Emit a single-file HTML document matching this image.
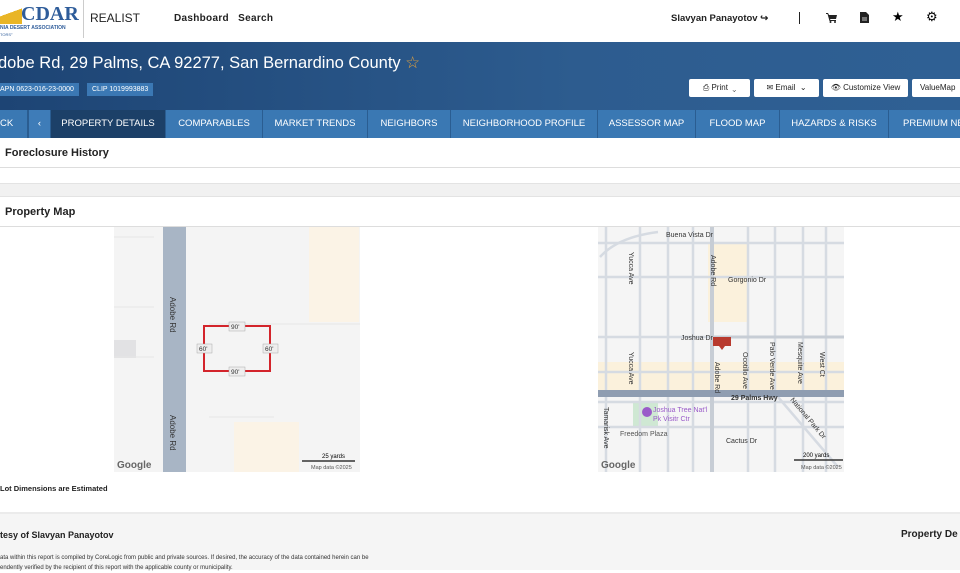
<!DOCTYPE html>
<html><head><meta charset="utf-8"><style>
*{margin:0;padding:0;box-sizing:border-box}
body{width:960px;height:570px;overflow:hidden;font-family:"Liberation Sans",sans-serif;background:#fff;position:relative}
.a{position:absolute;white-space:nowrap}
.hdr{left:0;top:0;width:960px;height:42px;background:#fff}
.ban{left:0;top:42px;width:960px;height:68px;background:linear-gradient(90deg,#1d4474,#2d5c8f 60%,#2f6094)}
.badge{background:#3b78b4;color:#fff;font-size:7px;height:13px;line-height:13px;padding:0 5px;top:83px}
.btn{top:79px;height:18px;background:#fff;border-radius:2px;font-size:8px;line-height:18px;color:#222;text-align:center}
.nav{left:0;top:110px;width:960px;height:28px;background:#3a78b3}
.tab{top:110px;height:28px;line-height:28px;color:#fff;font-size:9.5px;text-align:center;border-right:1px solid #2a5d91}
.sec{font-size:11px;font-weight:bold;color:#222}
</style></head><body>
<div class="a hdr"></div>
<div class="a" style="left:0;top:6px;width:22px;height:18px;background:linear-gradient(160deg,#fff 40%,#e9b526 40%)"></div>
<div class="a" style="top:3px;font:bold 20px 'Liberation Serif',serif;color:#2e5c9a;left:21px">CDAR</div>
<div class="a" style="left:0;top:25px;font-size:5px;font-weight:bold;color:#2e5c9a">NIA DESERT ASSOCIATION</div>
<div class="a" style="left:0;top:32px;font-size:4px;color:#2e5c9a">TORS°</div>
<div class="a" style="left:83px;top:0;width:1px;height:38px;background:#ccc"></div>
<div class="a" style="left:90px;top:11px;font-size:12px;color:#222">REALIST</div>
<div class="a" style="left:174px;top:13px;font-size:10px;font-weight:bold;color:#222;letter-spacing:.3px">Dashboard&nbsp;&nbsp; Search</div>
<div class="a" style="left:671px;top:13px;font-size:9.5px;font-weight:bold;color:#222">Slavyan Panayotov ↪</div>
<div class="a" style="left:799px;top:12px;width:1px;height:12px;background:#222"></div>
<svg class="a" style="left:826px;top:13px" width="11" height="10" viewBox="0 0 11 10"><path d="M0 0h2l1 2h8l-1 4H4l.5 1H10v1H3.5L1.5 1H0z" fill="#222"/><circle cx="4.5" cy="9" r="1" fill="#222"/><circle cx="9" cy="9" r="1" fill="#222"/></svg>
<svg class="a" style="left:860px;top:12px" width="9" height="11" viewBox="0 0 9 11"><path d="M0 0h6l3 3v8H0z" fill="#222"/><path d="M2 6h5M2 8h5" stroke="#fff" stroke-width=".8"/></svg>
<div class="a" style="left:892px;top:9px;font-size:13px">★</div>
<div class="a" style="left:926px;top:9px;font-size:13px">⚙</div>
<div class="a ban"></div>
<div class="a" style="left:-2px;top:53px;font-size:16.5px;color:#fff">dobe Rd, 29 Palms, CA 92277, San Bernardino County <span style="color:#e8a33a">☆</span></div>
<div class="a badge" style="left:0;padding-left:0">APN 0623-016-23-0000</div>
<div class="a badge" style="left:87px">CLIP 1019993883</div>
<div class="a btn" style="left:689px;width:61px">⎙ Print&nbsp; ⌄</div>
<div class="a btn" style="left:754px;width:65px">✉ Email&nbsp; ⌄</div>
<div class="a btn" style="left:823px;width:85px">👁 Customize View</div>
<div class="a btn" style="left:912px;width:60px;text-align:left;padding-left:8px">ValueMap</div>
<div class="a nav"></div>
<div class="a tab" style="left:0;width:28px;text-align:left">CK</div>
<div class="a tab" style="left:28px;width:23px;background:#3e7cb8;border-left:1px solid #2a5d91">‹</div>
<div class="a tab" style="left:51px;width:115px;background:#1c4068">PROPERTY DETAILS</div>
<div class="a tab" style="left:166px;width:97px">COMPARABLES</div>
<div class="a tab" style="left:263px;width:105px">MARKET TRENDS</div>
<div class="a tab" style="left:368px;width:83px">NEIGHBORS</div>
<div class="a tab" style="left:451px;width:147px">NEIGHBORHOOD PROFILE</div>
<div class="a tab" style="left:598px;width:98px">ASSESSOR MAP</div>
<div class="a tab" style="left:696px;width:84px">FLOOD MAP</div>
<div class="a tab" style="left:780px;width:109px">HAZARDS &amp; RISKS</div>
<div class="a tab" style="left:889px;width:100px;text-align:left;padding-left:14px">PREMIUM NE</div>
<div class="a sec" style="left:5px;top:147px">Foreclosure History</div>
<div class="a" style="left:0;top:167px;width:960px;height:1px;background:#ddd"></div>
<div class="a" style="left:0;top:183px;width:960px;height:14px;background:#f1f1f1;border-top:1px solid #e3e3e3;border-bottom:1px solid #e3e3e3"></div>
<div class="a sec" style="left:5px;top:206px">Property Map</div>
<div class="a" style="left:0;top:226px;width:960px;height:1px;background:#ddd"></div>
<svg class="a" style="left:114px;top:227px" width="246" height="245">
<rect width="246" height="245" fill="#f4f4f4"/>
<rect x="195" y="0" width="50" height="95" fill="#fbf3e6"/>
<rect x="120" y="195" width="65" height="50" fill="#fbf3e6"/>
<rect x="0" y="113" width="22" height="18" fill="#e2e2e4"/>
<path d="M0 10H40M0 80H40M0 130H40M95 97H246M95 190H160" stroke="#e6e6e6" fill="none"/>
<rect x="49" y="0" width="23" height="245" fill="#a8b5c5"/>
<text transform="translate(56,70) rotate(90)" font-size="8" fill="#333" font-family="Liberation Sans">Adobe Rd</text>
<text transform="translate(56,188) rotate(90)" font-size="8" fill="#333" font-family="Liberation Sans">Adobe Rd</text>
<rect x="90" y="99" width="66" height="45" fill="none" stroke="#d3242b" stroke-width="2"/>
<g font-size="6.5" font-family="Liberation Sans" fill="#333">
<rect x="115" y="95" width="16" height="9" fill="#eee" stroke="#aaa" stroke-width=".5"/><text x="117" y="102">90'</text>
<rect x="115" y="140" width="16" height="9" fill="#eee" stroke="#aaa" stroke-width=".5"/><text x="117" y="147">90'</text>
<rect x="83" y="117" width="15" height="9" fill="#eee" stroke="#aaa" stroke-width=".5"/><text x="85" y="124">60'</text>
<rect x="149" y="117" width="15" height="9" fill="#eee" stroke="#aaa" stroke-width=".5"/><text x="151" y="124">60'</text>
</g>
<text x="3" y="241" font-size="10" font-weight="bold" fill="#666" font-family="Liberation Sans">Google</text>
<path d="M188 234H241" stroke="#333" stroke-width="1.5"/><text x="208" y="231" font-size="6" font-family="Liberation Sans">25 yards</text>
<text x="197" y="242" font-size="5.5" fill="#555" font-family="Liberation Sans">Map data ©2025</text>
</svg>
<svg class="a" style="left:598px;top:227px" width="246" height="245">
<rect width="246" height="245" fill="#f5f5f5"/>
<rect x="0" y="135" width="246" height="30" fill="#fbf1dc"/>
<rect x="110" y="15" width="40" height="80" fill="#fbf1dc"/>
<rect x="35" y="175" width="25" height="25" fill="#cfe8d3"/>
<g stroke="#d6dbe2" stroke-width="2.5" fill="none">
<path d="M0 16H246M0 110H246M0 200H246M0 50H246M0 145H246M0 175H246"/>
<path d="M8 0V245M42 0V245M70 0V245M95 0V245M150 0V245M177 0V245M205 0V245M228 0V245M2 30Q20 10 60 5"/>
<path d="M180 170L240 240"/>
</g>
<rect x="112" y="0" width="4" height="245" fill="#c7cdd5"/>
<rect x="0" y="163" width="246" height="7" fill="#8f9db1"/>
<path d="M116 110H246" stroke="#c7cdd5" stroke-width="3"/>
<g font-size="7" fill="#333" font-family="Liberation Sans">
<text x="68" y="10">Buena Vista Dr</text><text x="130" y="55">Gorgonio Dr</text><text x="83" y="113">Joshua Dr</text>
<text transform="translate(113,28) rotate(90)">Adobe Rd</text><text transform="translate(117,135) rotate(90)">Adobe Rd</text>
<text transform="translate(31,25) rotate(90)">Yucca Ave</text><text transform="translate(31,125) rotate(90)">Yucca Ave</text>
<text transform="translate(145,125) rotate(90)">Ocotillo Ave</text><text transform="translate(172,115) rotate(90)">Palo Verde Ave</text>
<text transform="translate(200,115) rotate(90)">Mesquite Ave</text><text transform="translate(222,125) rotate(90)">West Ct</text>
<text transform="translate(6,180) rotate(90)">Tamarisk Ave</text><text x="128" y="216">Cactus Dr</text>
<text x="133" y="173" font-weight="bold">29 Palms Hwy</text>
<text transform="translate(192,173) rotate(50)">National Park Dr</text>
<text x="22" y="209" fill="#555">Freedom Plaza</text>
<text x="55" y="185" fill="#9a5bc9">Joshua Tree Nat'l</text><text x="55" y="194" fill="#9a5bc9">Pk Visitr Ctr</text>
</g>
<circle cx="49" cy="185" r="5" fill="#9a5bc9"/>
<path d="M115 110h18v9h-6l-3 4-3-4h-6z" fill="#b83a2e"/>
<text x="3" y="241" font-size="10" font-weight="bold" fill="#666" font-family="Liberation Sans">Google</text>
<path d="M196 233H245" stroke="#333" stroke-width="1.5"/><text x="205" y="230" font-size="6" font-family="Liberation Sans">200 yards</text>
<text x="203" y="242" font-size="5.5" fill="#555" font-family="Liberation Sans">Map data ©2025</text>
</svg>
<div class="a" style="left:0;top:484px;font-size:7.5px;font-weight:bold;color:#222">Lot Dimensions are Estimated</div>
<div class="a" style="left:0;top:512px;width:960px;height:58px;background:#f5f5f5;border-top:2px solid #ebebeb"></div>
<div class="a" style="left:0;top:530px;font-size:9px;font-weight:bold;color:#222">tesy of Slavyan Panayotov</div>
<div class="a" style="left:901px;top:529px;font-size:10px;font-weight:bold;color:#222">Property De</div>
<div class="a" style="left:0;top:553px;font-size:6px;color:#333;line-height:10px">ata within this report is compiled by CoreLogic from public and private sources. If desired, the accuracy of the data contained herein can be<br>endently verified by the recipient of this report with the applicable county or municipality.</div>
</body></html>
